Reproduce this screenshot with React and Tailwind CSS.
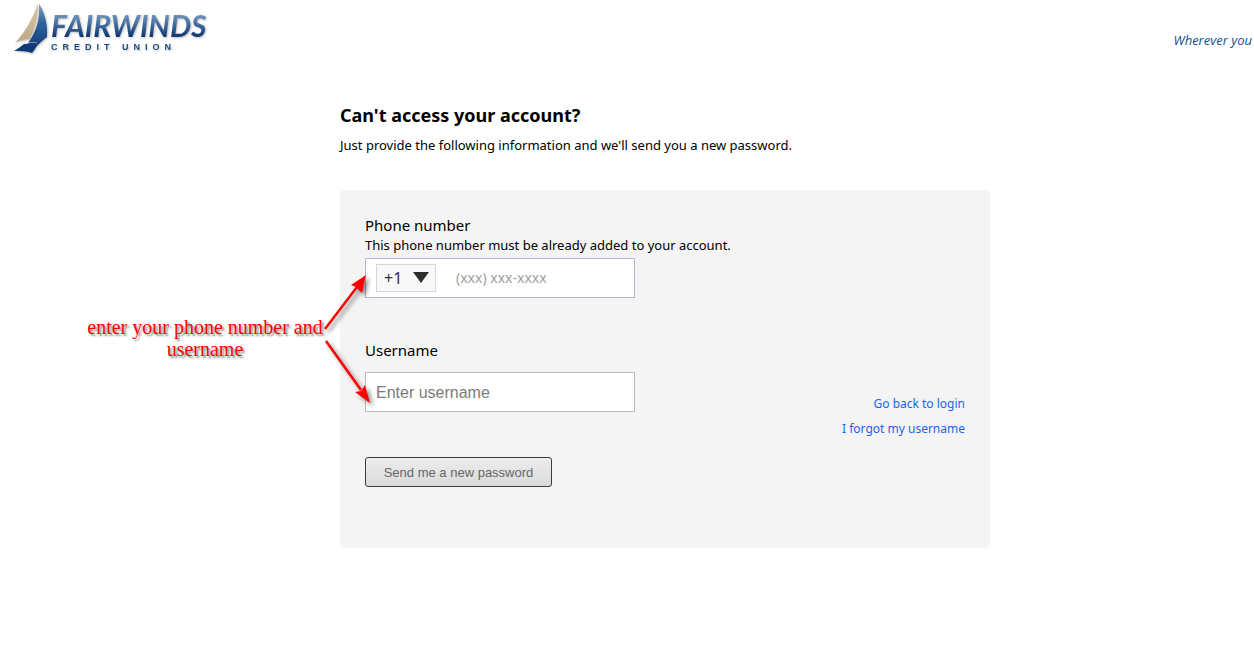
import { useState } from 'react';

const body = "font-['Noto_Sans',sans-serif]";

function SailIcon() {
  return (
    <svg className="w-9 h-14 shrink-0" viewBox="0 0 36 56" aria-hidden="true">
      <defs>
        <linearGradient id="sail" x1="0" y1="0" x2="0" y2="1">
          <stop offset="0" stopColor="#7d9fc2" />
          <stop offset="0.4" stopColor="#2f629a" />
          <stop offset="1" stopColor="#0c3673" />
        </linearGradient>
        <linearGradient id="jib" x1="0" y1="0" x2="0" y2="1">
          <stop offset="0" stopColor="#d9c8a6" />
          <stop offset="1" stopColor="#bda884" />
        </linearGradient>
      </defs>
      <path d="M24 3 C19 18 12 31 1 43 C6 40 11 39 16 39 C21 28 24 16 24 3Z" fill="url(#jib)" />
      <path d="M25 4 C26 18 23 31 14 43 C18 43 20 44 20 46 L17 52 C21 48 26 42 33 37 C34 25 31 13 25 4Z" fill="url(#sail)" />
      <path d="M0 51 C4 49 7 46 10 44 C14 43 18 43 22 42 C25 44 21 49 18 53 C12 51 6 51 0 51Z" fill="#0f3a76" />
      <path d="M11 44 C15 42 20 42 23 43" fill="none" stroke="#fff" strokeWidth="0.5" />
    </svg>
  );
}

function Logo() {
  return (
    <div className="flex items-start drop-shadow-[1px_1px_1px_rgba(0,0,0,0.25)]">
      <SailIcon />
      <div className="pt-[9px] pl-px">
        <div className="font-['Lato',sans-serif] text-[30px] leading-8 font-bold italic bg-linear-to-b from-[#7ba0c4] from-10% to-[#0f3a76] to-85% bg-clip-text text-transparent">
          FAIRWINDS
        </div>
        <div className="font-['Liberation_Sans',sans-serif] text-[9px] leading-3 font-bold tracking-[5px] text-[#1f4b84]">
          CREDIT UNION
        </div>
      </div>
    </div>
  );
}

function Annotation() {
  return (
    <div className="absolute left-[84px] top-[260px] w-[300px] h-40 pointer-events-none">
      <p className="w-[242px] pt-14 text-center font-['Liberation_Serif',serif] text-[20px] leading-[22px] text-[#ff0000] [text-shadow:2px_2px_2px_rgba(0,0,0,0.45)]">
        enter your phone number and username
      </p>
      <svg className="absolute inset-0 w-[300px] h-40 drop-shadow-[3px_3px_2px_rgba(0,0,0,0.45)]" viewBox="0 0 300 160" aria-hidden="true">
        <g stroke="#ff0000" strokeWidth="2.5">
          <path d="M241 69 L273 27" />
          <path d="M242 81 L277 130" />
        </g>
        <path d="M282 15 L267 25 L272 27 L278 33Z" fill="#ff0000" />
        <path d="M286 143 L271 132 L277 131 L281 125Z" fill="#ff0000" />
      </svg>
    </div>
  );
}

export default function App() {
  const [code, setCode] = useState('+1');

  return (
    <div className={`relative min-h-screen overflow-hidden bg-white text-black ${body}`}>
      <header className="flex justify-between pl-[14px] h-14">
        <Logo />
        <span className="pt-8 pr-[2px] font-['Open_Sans',sans-serif] text-[13px] leading-4 italic text-[#10508c]">Wherever you</span>
      </header>

      <main className="ml-[340px] mr-4 max-w-[650px] pt-[47px]">
        <h1 className="text-lg leading-6 font-bold">Can't access your account?</h1>
        <p className="mt-2 text-[13px] leading-5">Just provide the following information and we'll send you a new password.</p>

        <form className="mt-[35px] h-[358px] rounded-[5px] bg-[#f4f4f4] px-[25px] pt-[25px]" onSubmit={e => e.preventDefault()}>
          <label htmlFor="phone" className="block text-[15px] leading-5">Phone number</label>
          <p className="text-[13px] leading-5">This phone number must be already added to your account.</p>
          <div className="mt-[3px] flex items-center w-[270px] h-10 border border-[#b4b4cc] bg-white px-[10px]">
            <div className="relative w-[60px] h-7 shrink-0">
              <select aria-label="Country code" value={code} onChange={e => setCode(e.target.value)}
                className="appearance-none w-full h-full border border-[#d6d6d6] bg-[#f8f8f8] pl-[7px] text-base leading-6 text-[#333]">
                <option>+1</option>
              </select>
              <svg className="absolute right-[7px] top-2 w-4 h-[11px] pointer-events-none" viewBox="0 0 16 11" aria-hidden="true">
                <path d="M0 0H16L8 11Z" fill="#2d2d2d" />
              </svg>
            </div>
            <input id="phone" type="tel" placeholder="(xxx) xxx-xxxx"
              className="ml-5 min-w-0 flex-1 text-sm leading-5 outline-none placeholder:text-[#a0a0a0]" />
          </div>

          <label htmlFor="username" className="mt-[42px] block text-[15px] leading-5">Username</label>
          <div className="mt-3 flex items-start justify-between">
            <input id="username" type="text" placeholder="Enter username"
              className="w-[270px] h-10 border border-[#bbb] bg-white px-[10px] pt-[2px] font-['Liberation_Sans',sans-serif] text-base leading-5 outline-none placeholder:text-[#7b7b7b]" />
            <nav className="flex flex-col items-end gap-[5px] pt-[22px] text-xs leading-5 text-[#1464f6]">
              <a href="#login">Go back to login</a>
              <a href="#forgot">I forgot my username</a>
            </nav>
          </div>
          <button type="submit"
            className="mt-[18px] w-[187px] h-[30px] rounded-[3px] border border-[#3c3c3c] bg-linear-to-b from-[#ededed] to-[#dadada] pt-[2px] font-['Liberation_Sans',sans-serif] text-[13px] leading-4 text-[#666]">
            Send me a new password
          </button>
        </form>
      </main>

      <Annotation />
    </div>
  );
}
